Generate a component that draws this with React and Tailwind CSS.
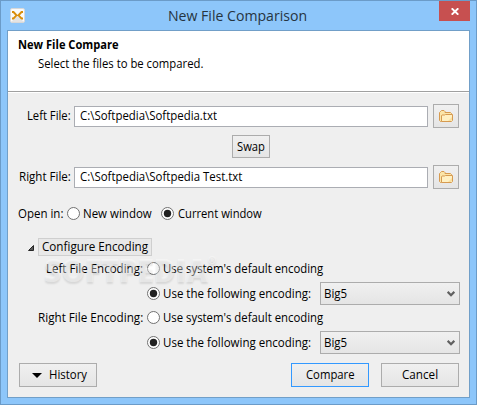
import React, { useLayoutEffect, useRef, useState } from "react";

// Condenses a line of text horizontally so that it fills its box.
function Fit({ className = "", children }) {
  const inner = useRef(null);
  const outer = useRef(null);
  const [scale, setScale] = useState(1);
  useLayoutEffect(() => {
    setScale(outer.current.clientWidth / inner.current.offsetWidth);
  }, []);
  return (
    <span ref={outer} className={`flex shrink-0 items-center whitespace-nowrap ${className}`}>
      <span ref={inner} className="inline-block origin-left shrink-0" style={{ transform: `scaleX(${scale})` }}>
        {children}
      </span>
    </span>
  );
}

function Radio({ on }) {
  return (
    <svg className="size-[13px] shrink-0" viewBox="0 0 13 13">
      <circle cx="6.5" cy="6.5" r="6" fill="#fff" stroke="#707070" />
      {on && <circle cx="6.5" cy="6.5" r="3.7" fill="#212121" />}
    </svg>
  );
}

function Button({ className = "", children }) {
  return (
    <button className={`flex shrink-0 items-center justify-center border bg-linear-to-b from-[#f0f0f0] to-[#e5e5e5] ${className}`}>
      {children}
    </button>
  );
}

function Folder() {
  return (
    <svg className="h-[12px] w-[14px]" viewBox="0 0 14 12">
      <path d="M2.5 11.500h-1l-1-1v-8l1-1 1-1h2.500l1 1v1h5.500l1 1v2" fill="#fbe5a8" stroke="#d69a50" />
      <path d="M2.500 11.500v-6l.5-.5h2.500l1-.5h7v6l-1 1z" fill="#fff0c2" stroke="#d69a50" />
      <path d="M9 11l4-4v3l-1 1z" fill="#f9e0a0" />
    </svg>
  );
}

function FileRow({ label, labelWidth, value, valueWidth }) {
  return (
    <div className="flex h-6 items-center">
      <div className="flex w-[63px] justify-end">
        <Fit className={`pb-[2px] ${labelWidth}`}>{label}</Fit>
      </div>
      <div className="ml-[3px] flex h-[21px] w-[354px] items-center border border-[#abadb3] bg-white pb-[2px] pl-[5px]">
        <Fit className={valueWidth}>{value}</Fit>
      </div>
      <Button className="ml-[5px] h-6 w-[26px] border-[#acacac]">
        <Folder />
      </Button>
    </div>
  );
}

function Encoding({ label, labelWidth }) {
  return (
    <>
      <div className="flex h-[13px] items-center">
        <div className="flex w-[135px] justify-end">
          <Fit className={labelWidth}>{label}</Fit>
        </div>
        <span className="ml-1 flex"><Radio /></span>
        <Fit className="ml-[3px] w-[160px]">Use system's default encoding</Fit>
      </div>
      <div className="mt-[7px] flex h-[23px] items-center">
        <span className="ml-[139px] flex"><Radio on /></span>
        <Fit className="ml-[3px] w-[148px]">Use the following encoding:</Fit>
        <Button className="ml-[9px] h-[23px] w-[140px] justify-between! border-[#acacac] pr-1 pl-[3px]">
          <Fit className="w-[23px]">Big5</Fit>
          <svg className="h-[6px] w-[8px]" viewBox="0 0 8 6">
            <path d="M.7.900 4 4.200 7.300.900" fill="none" stroke="#606060" strokeWidth="2.200" />
          </svg>
        </Button>
      </div>
    </>
  );
}

export default function App() {
  return (
    <div className="flex h-[405px] w-[477px] flex-col border border-[#6b9bc8] bg-[#8dc6fa] font-['Open_Sans','Noto_Sans',sans-serif] text-[12px] leading-[15px] text-black">
      <header className="flex h-[29px] shrink-0 items-start">
        <svg className="mt-[7px] ml-[9px] size-[15px]" viewBox="0 0 15 15">
          <rect x=".5" y=".5" width="14" height="14" rx="1.500" fill="#fafafa" stroke="#d8d8d8" />
          <path d="M1 14 7.500 8 14 14z" fill="#e3e3e3" />
          <path d="M2 4h1.500l3 3.300-3 3.200H2M13 4h-1.500l-3 3.300 3 3.200H13" fill="none" stroke="#d98e0b" strokeWidth="1.900" />
        </svg>
        <Fit className="mt-[3px] ml-[143px] h-[22px] w-[139px] text-[15px] text-[#26343f]">New File Comparison</Fit>
        <button className="ml-[132px] flex h-5 w-[31px] items-center justify-center bg-[#c75050]">
          <svg className="h-[7px] w-[8px]" viewBox="0 0 8 7">
            <path d="M.7.300l6.600 6.400M7.300.300.700 6.700" stroke="#fff" strokeWidth="1.900" />
          </svg>
        </button>
      </header>

      <main className="relative ml-[6px] h-[368px] w-[463px] border border-[#719fc8] bg-[#efefef]">
        <div className="h-[62px] border-b border-white bg-white shadow-[inset_0_-1px_0_#a0a0a0]">
          <Fit className="ml-[10px] h-[26px] w-[101px] font-bold">New File Compare</Fit>
          <Fit className="ml-[30px] h-[13px] w-[165px]">Select the files to be compared.</Fit>
        </div>

        <div className="pt-[11px]">
          <FileRow label="Left File:" labelWidth="w-[44px]" value={"C:\\Softpedia\\Softpedia.txt"} valueWidth="w-[137px]" />
          <Button className="mt-[7px] mb-[7px] ml-[224px] h-[23px] w-[38px] border-[#acacac]">
            <Fit className="w-[28px]">Swap</Fit>
          </Button>
          <FileRow label="Right File:" labelWidth="w-[52px]" value={"C:\\Softpedia\\Softpedia Test.txt"} valueWidth="w-[162px]" />
        </div>

        <div className="mt-[18px] ml-[10px] flex h-[13px] items-center">
          <Fit className="w-[45px]">Open in:</Fit>
          <span className="ml-1 flex"><Radio /></span>
          <Fit className="ml-[3px] w-[69px]">New window</Fit>
          <span className="ml-[9px] flex"><Radio on /></span>
          <Fit className="ml-[4px] w-[84px]">Current window</Fit>
        </div>

        <div className="mt-[18px] ml-5 flex h-[18px] items-center">
          <svg className="mt-[2px] size-[6px]" viewBox="0 0 6 6">
            <path d="M5.500 .500v5h-5z" fill="#595959" stroke="#262626" />
          </svg>
          <div className="ml-1 flex h-[18px] w-[114px] items-center justify-center border border-[#cfcfcf] bg-[#e8e8e8]">
            <Fit className="w-[106px] pb-px">Configure Encoding</Fit>
          </div>
        </div>

        <div className="mt-[6px]">
          <Encoding label="Left File Encoding:" labelWidth="w-[97px]" />
          <div className="h-[6px]" />
          <Encoding label="Right File Encoding:" labelWidth="w-[105px]" />
        </div>

        <div className="mt-[9px] flex pl-[11px]">
          <Button className="h-6 w-[78px] border-[#acacac]">
            <svg className="mr-[7px] ml-[3px] h-[5px] w-[10px]" viewBox="0 0 10 5">
              <path d="M0 0h10L5 5z" fill="#000" />
            </svg>
            <Fit className="w-[38px] pb-px">History</Fit>
          </Button>
          <Button className="ml-[194px] h-6 w-[78px] border-[#3399ff]">
            <Fit className="w-[49px] pb-px">Compare</Fit>
          </Button>
          <Button className="ml-3 h-6 w-[78px] border-[#acacac]">
            <Fit className="w-[36px] pb-px">Cancel</Fit>
          </Button>
        </div>

        {/* Translucent watermark over the encoding options */}
        <div className="pointer-events-none absolute top-[225px] left-[36px] flex h-[28px] text-[32px] leading-[28px] font-extrabold text-white/40 [text-shadow:0_2px_2px_rgba(0,0,0,0.1)]">
          <Fit className="w-[164px]">SOFTPEDIA</Fit>
          <span className="-mt-px text-[10px] leading-[10px]">®</span>
        </div>
      </main>
    </div>
  );
}
